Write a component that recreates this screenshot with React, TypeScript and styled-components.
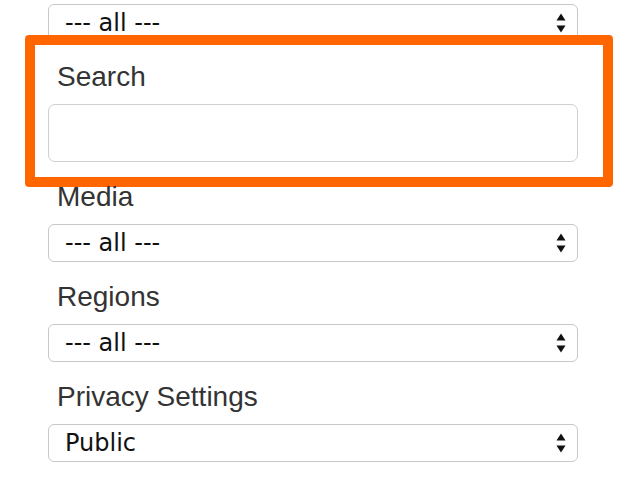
import React from 'react'
import styled, {createGlobalStyle} from 'styled-components'

const GlobalStyle = createGlobalStyle`
  html, body {
    margin: 0;
    padding: 0;
    background: #fff;
  }
  body {
    font-family: 'Liberation Sans', Arial, Helvetica, sans-serif;
  }
`

const Page = styled.div`
  width: 640px;
  height: 480px;
  overflow: hidden;
  background: #fff;
`

const Form = styled.form`
  display: flex;
  flex-direction: column;
  width: 530px;
  padding: 4px 0 0 48px;
`

const Field = styled.div<{$highlight?: boolean}>`
  position: relative;
  display: flex;
  flex-direction: column;

  ${({$highlight}) =>
    $highlight &&
    `
    &::before {
      content: '';
      position: absolute;
      top: -7px;
      left: -23px;
      right: -35px;
      bottom: -25px;
      border: 10px solid #ff6600;
      border-radius: 4px;
      pointer-events: none;
    }
  `}
`

const Label = styled.label`
  display: block;
  margin: 18px 0 10px;
  padding-left: 9px;
  font-size: 28px;
  line-height: 34px;
  color: #333;
`

const SelectWrap = styled.div`
  position: relative;
  height: 38px;
`

const Select = styled.select`
  appearance: none;
  -webkit-appearance: none;
  display: block;
  width: 100%;
  height: 38px;
  margin: 0;
  padding: 0 40px 0 16px;
  box-sizing: border-box;
  border: 1px solid #c8c8c8;
  border-radius: 6px;
  background: #fff;
  font-family: 'DejaVu Sans', 'Liberation Sans', sans-serif;
  font-size: 24px;
  color: #111;
  outline: none;
`

const Arrows = styled.svg`
  position: absolute;
  right: 12px;
  top: 50%;
  width: 10px;
  height: 20px;
  margin-top: -10px;
  pointer-events: none;
`

const TextInput = styled.input`
  display: block;
  width: 100%;
  height: 58px;
  margin: 0;
  box-sizing: border-box;
  border: 1px solid #cfcfcf;
  border-radius: 7px;
  background: #fff;
  font-size: 25px;
  padding: 0 16px;
  outline: none;
`

const SelectField = ({value}: {value: string}) => (
  <SelectWrap>
    <Select defaultValue={value}>
      <option value={value}>{value}</option>
    </Select>
    <Arrows viewBox="0 0 10 20">
      <path d="M5 0.5 L9.5 7.5 L0.5 7.5 Z" fill="#111" />
      <path d="M0.5 12.5 L9.5 12.5 L5 19.5 Z" fill="#111" />
    </Arrows>
  </SelectWrap>
)

const App = () => {
  return (
    <Page>
      <GlobalStyle />
      <Form>
        <Field>
          <SelectField value="--- all ---" />
        </Field>
        <Field $highlight>
          <Label>Search</Label>
          <TextInput type="text" />
        </Field>
        <Field>
          <Label>Media</Label>
          <SelectField value="--- all ---" />
        </Field>
        <Field>
          <Label>Regions</Label>
          <SelectField value="--- all ---" />
        </Field>
        <Field>
          <Label>Privacy Settings</Label>
          <SelectField value="Public" />
        </Field>
      </Form>
    </Page>
  )
}

export default App
